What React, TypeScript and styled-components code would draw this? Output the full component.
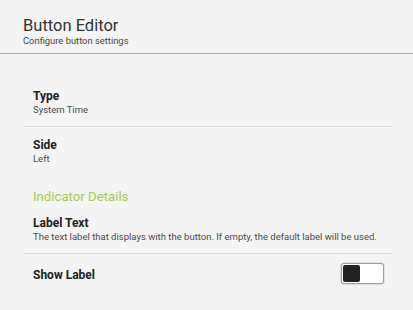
import styled, { createGlobalStyle } from "styled-components";

const GlobalStyle = createGlobalStyle`
  body {
    margin: 0;
    background: #f4f4f4;
    font-family: Roboto, "Liberation Sans", sans-serif;
  }
`;

const Page = styled.div`
  width: 413px;
  height: 310px;
  background: #f4f4f4;
  overflow: hidden;
`;

const Header = styled.header`
  padding: 16px 0 7px 23px;
  border-bottom: 1px solid #a9a9a9;
`;

const Title = styled.h1`
  margin: 0;
  font-size: 16.5px;
  line-height: 20px;
  font-weight: 400;
  color: #333;
`;

const Subtitle = styled.p`
  margin: 0;
  font-size: 9.4px;
  line-height: 10px;
  color: #444;
`;

const Content = styled.div`
  padding: 24px 20px 0 23px;
`;

const Row = styled.div<{ $divider?: boolean }>`
  display: flex;
  align-items: center;
  justify-content: space-between;
  padding: 10px 9px 10px 10px;
  border-bottom: ${(p) => (p.$divider ? "1px solid #dcdcdc" : "none")};
`;

const SwitchRow = styled(Row)`
  padding-top: 9px;
`;

const Label = styled.div<{ $offset?: number }>`
  margin-top: ${(p) => p.$offset ?? 0}px;
  font-size: 12px;
  line-height: 16px;
  font-weight: 700;
  color: #212121;
`;

const Value = styled.div`
  font-size: 9.5px;
  line-height: 12px;
  color: #4a4a4a;
`;

const SectionTitle = styled.h2`
  margin: 14px 0 0;
  padding-left: 10px;
  font-size: 13.2px;
  line-height: 16px;
  font-weight: 400;
  color: #a6c84e;
`;

const Toggle = styled.div`
  box-sizing: border-box;
  width: 43px;
  height: 21px;
  padding: 1px;
  border: 1px solid #9c9c9c;
  border-radius: 3px;
  background: #fff;
  box-shadow: 0 0 0 0.5px #c8c8c8;
  display: flex;
`;

const Knob = styled.div`
  width: 17px;
  height: 17px;
  border-radius: 2px;
  background: #222;
`;

export default function App() {
  return (
    <Page>
      <GlobalStyle />
      <Header>
        <Title>Button Editor</Title>
        <Subtitle>Configure button settings</Subtitle>
      </Header>
      <Content>
        <Row $divider>
          <div>
            <Label>Type</Label>
            <Value>System Time</Value>
          </div>
        </Row>
        <Row>
          <div>
            <Label>Side</Label>
            <Value>Left</Value>
          </div>
        </Row>
        <SectionTitle>Indicator Details</SectionTitle>
        <Row $divider>
          <div>
            <Label>Label Text</Label>
            <Value>
              The text label that displays with the button. If empty, the default label will be used.
            </Value>
          </div>
        </Row>
        <SwitchRow>
          <Label $offset={3}>Show Label</Label>
          <Toggle>
            <Knob />
          </Toggle>
        </SwitchRow>
      </Content>
    </Page>
  );
}
